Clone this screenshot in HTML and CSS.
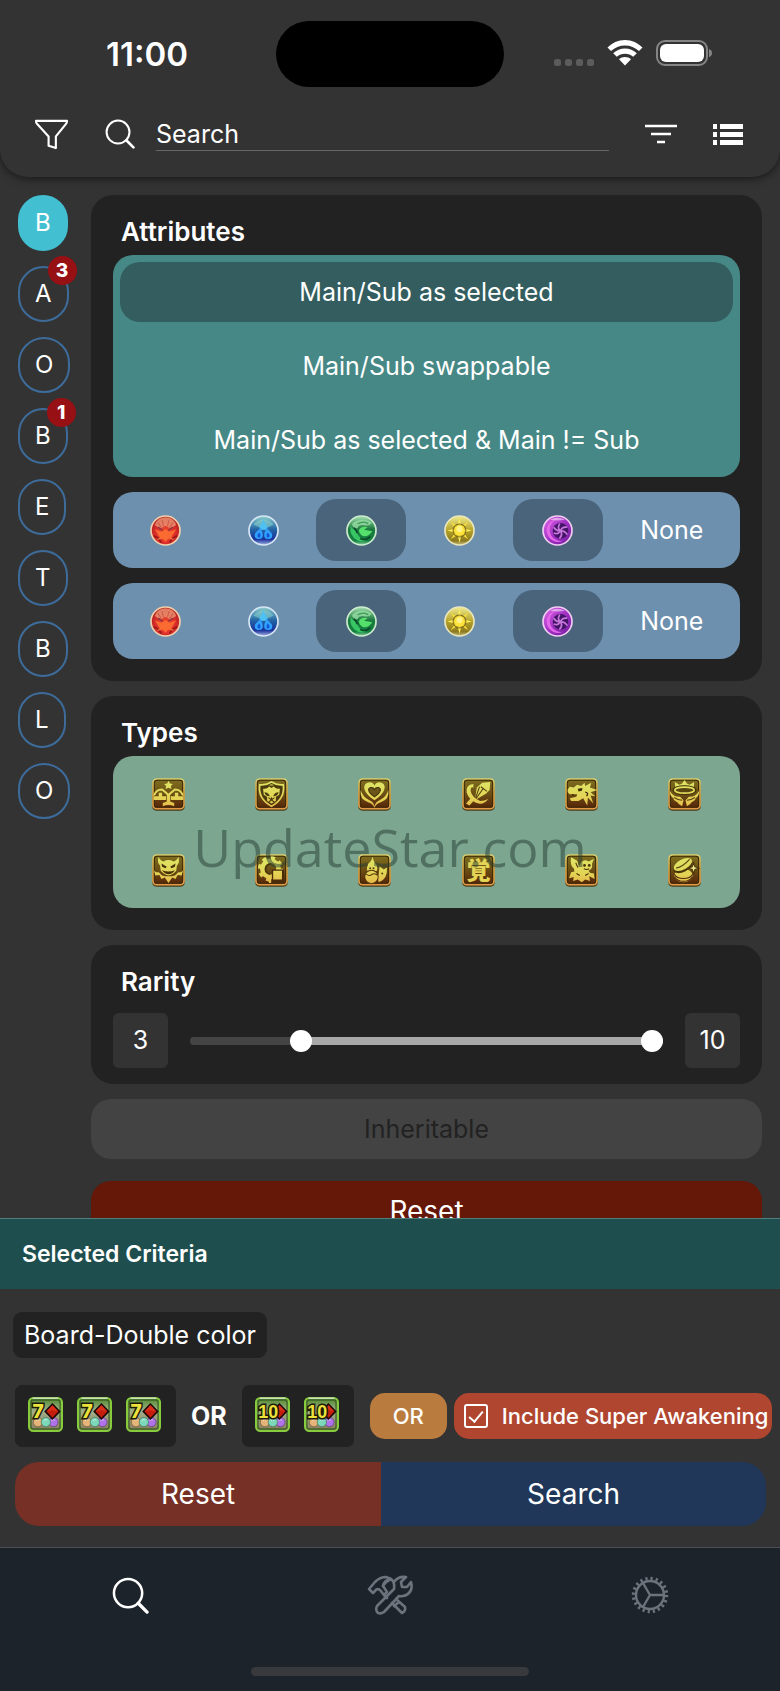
FILE: index.html
```html
<!DOCTYPE html>
<html lang="en">
<head>
    <meta charset="UTF-8">
    <meta name="viewport" content="width=device-width, initial-scale=1.0">
    <title>Search</title>
    <link rel="stylesheet" href="styles.css">
</head>
<body>
    <!-- Shared icons -->
    <svg class="sprite" width="0" height="0" aria-hidden="true">
        <defs>
            <linearGradient id="tile-bg" x1="0" y1="0" x2="0" y2="1">
                <stop offset="0" stop-color="#80701f"/>
                <stop offset="0.5" stop-color="#6b4f14"/>
                <stop offset="1" stop-color="#562308"/>
            </linearGradient>
            <linearGradient id="tile-edge" x1="0" y1="0" x2="0" y2="1">
                <stop offset="0" stop-color="#d9cf6c"/>
                <stop offset="0.5" stop-color="#dba747"/>
                <stop offset="1" stop-color="#e09a45"/>
            </linearGradient>
            <linearGradient id="gold" gradientUnits="userSpaceOnUse" x1="0" y1="10" x2="0" y2="90">
                <stop offset="0" stop-color="#dde566"/>
                <stop offset="0.6" stop-color="#e3d455"/>
                <stop offset="1" stop-color="#e6b548"/>
            </linearGradient>
            <radialGradient id="orb-red" cx="0.5" cy="0.6" r="0.55">
                <stop offset="0" stop-color="#f4532c"/>
                <stop offset="0.6" stop-color="#dd2f2b"/>
                <stop offset="1" stop-color="#b3201f"/>
            </radialGradient>
            <linearGradient id="orb-blue" x1="0" y1="0" x2="0" y2="1">
                <stop offset="0" stop-color="#8fd0cc"/>
                <stop offset="0.45" stop-color="#2467a5"/>
                <stop offset="0.8" stop-color="#17309a"/>
                <stop offset="1" stop-color="#a5b4e4"/>
            </linearGradient>
            <linearGradient id="orb-green" x1="0" y1="0" x2="0" y2="1">
                <stop offset="0" stop-color="#a5e0b0"/>
                <stop offset="0.45" stop-color="#1c7a3e"/>
                <stop offset="0.85" stop-color="#128040"/>
                <stop offset="1" stop-color="#8fd0a0"/>
            </linearGradient>
            <linearGradient id="orb-yellow" x1="0" y1="0" x2="0" y2="1">
                <stop offset="0" stop-color="#efeb8c"/>
                <stop offset="0.5" stop-color="#b5a128"/>
                <stop offset="0.85" stop-color="#8d7a20"/>
                <stop offset="1" stop-color="#c9c080"/>
            </linearGradient>
            <linearGradient id="orb-purple" x1="0" y1="0" x2="1" y2="1">
                <stop offset="0" stop-color="#e06be8"/>
                <stop offset="0.5" stop-color="#a231c4"/>
                <stop offset="1" stop-color="#6d1a9a"/>
            </linearGradient>
            <linearGradient id="awk-bg" x1="0" y1="0" x2="0" y2="1">
                <stop offset="0" stop-color="#4f8a2e"/>
                <stop offset="0.4" stop-color="#a3b08a"/>
                <stop offset="1" stop-color="#8a7a5c"/>
            </linearGradient>
        </defs>

        <symbol id="fire" viewBox="0 0 92 92">
            <circle cx="46" cy="46" r="43" fill="url(#orb-red)" stroke="#f0d0ac" stroke-width="5"/>
            <path d="M14 30 Q22 8 46 7 Q70 8 78 30 Q70 36 60 40 L46 32 L32 40 Q20 36 14 30Z" fill="#ee9c77" opacity="0.75"/>
            <path d="M24 22 L34 38 M36 16 L40 34 M56 16 L52 34 M68 22 L58 38" stroke="#c85a4a" stroke-width="3"/>
            <path d="M14 42 L34 50 L46 42 L58 50 L78 42 L68 58 L62 68 L52 72 L46 80 L40 72 L30 68 L24 58Z" fill="#fb6a31"/>
            <path d="M24 36 L38 46 M68 36 L54 46" stroke="#8d3440" stroke-width="4"/>
            <path d="M12 62 Q24 66 34 82 M80 62 Q68 66 58 82" fill="none" stroke="#9e1717" stroke-width="5"/>
            <path d="M22 72 L32 70 M70 72 L60 70" stroke="#fb8a51" stroke-width="3"/>
        </symbol>
        <symbol id="water" viewBox="0 0 92 92">
            <circle cx="46" cy="46" r="43" fill="url(#orb-blue)" stroke="#d6e6f4" stroke-width="5"/>
            <path d="M16 28 Q46 -2 76 28 Q62 38 46 38 Q30 38 16 28Z" fill="#8ad6d0" opacity="0.55"/>
            <path d="M46 12 C49 24 58 32 58 38 Q54 46 46 44 Q38 46 34 38 C34 32 43 24 46 12Z" fill="#4fc0f2"/>
            <path d="M36 38 C42 48 44 54 44 61 A12 11 0 0 1 20 60 C20 52 30 48 36 38Z" fill="#2fa0fb"/>
            <path d="M56 38 C50 48 48 54 48 61 A12 11 0 0 0 72 60 C72 52 62 48 56 38Z" fill="#2fa0fb"/>
            <path d="M34 52 Q38 58 36 66 Q30 68 28 62 Q28 56 34 52Z M58 52 Q54 58 56 66 Q62 68 64 62 Q64 56 58 52Z" fill="#1453d6"/>
        </symbol>
        <symbol id="wood" viewBox="0 0 92 92">
            <circle cx="46" cy="46" r="43" fill="url(#orb-green)" stroke="#cdeccf" stroke-width="5"/>
            <path d="M18 26 Q46 4 76 22 Q72 34 50 30 Q36 30 34 40 Q18 38 18 26Z" fill="#93d9a0" opacity="0.85"/>
            <path d="M34 26 Q54 16 66 26" fill="none" stroke="#3f9a58" stroke-width="4"/>
            <path d="M14 34 Q8 60 34 76 Q50 82 60 74 Q40 72 34 56 Q30 44 22 42Z" fill="#38c564"/>
            <path d="M38 46 Q44 32 64 36 L54 44 L78 48 Q66 66 50 62 Q40 58 38 46Z" fill="#55e06c"/>
            <path d="M24 38 Q30 44 34 54 M42 70 Q58 78 72 64" fill="none" stroke="#0a4a28" stroke-width="5"/>
        </symbol>
        <symbol id="light" viewBox="0 0 92 92">
            <circle cx="46" cy="46" r="43" fill="url(#orb-yellow)" stroke="#eae6bc" stroke-width="5"/>
            <path d="M46 10 L51 30 L41 30Z M46 82 L51 62 L41 62Z M10 46 L30 41 L30 51Z M82 46 L62 41 L62 51Z" fill="#ffef5a"/>
            <path d="M20 20 L38 32 L32 38Z M72 20 L54 32 L60 38Z M20 72 L38 60 L32 54Z M72 72 L54 60 L60 54Z" fill="#fbe13c"/>
            <circle cx="46" cy="46" r="19" fill="none" stroke="#7d6a18" stroke-width="3"/>
            <circle cx="46" cy="46" r="16" fill="#ffe338"/>
            <circle cx="46" cy="42" r="9" fill="#fff28a"/>
        </symbol>
        <symbol id="dark" viewBox="0 0 92 92">
            <circle cx="46" cy="46" r="43" fill="url(#orb-purple)" stroke="#f0ccf2" stroke-width="5"/>
            <path d="M48 12 A34 34 0 1 0 64 76 A32 32 0 0 1 48 12Z" fill="#e467ea"/>
            <circle cx="55" cy="47" r="23" fill="#431468"/>
            <path d="M55 47 Q44 40 52 27 M55 47 Q60 34 73 36 M55 47 Q68 46 74 57 M55 47 Q62 58 53 68 M55 47 Q48 58 37 54 M55 47 Q42 48 36 38" fill="none" stroke="#c878da" stroke-width="5" stroke-linecap="round"/>
            <path d="M24 14 Q46 2 68 14 Q46 18 24 14Z" fill="#fff" opacity="0.5"/>
        </symbol>

        <symbol id="tile" viewBox="0 0 98 98">
            <rect x="1" y="5" width="96" height="92" rx="12" fill="#4a3a18"/>
            <rect x="3" y="3" width="92" height="88" rx="11" fill="url(#tile-bg)" stroke="url(#tile-edge)" stroke-width="5"/>
            <rect x="7" y="7" width="84" height="80" rx="8" fill="none" stroke="#3d2a08" stroke-width="3"/>
        </symbol>
        <symbol id="balanced" viewBox="0 0 98 98">
            <use href="#tile"/>
            <path d="M49 8 L53 16 L62 18 L56 24 L58 33 L49 29 L40 33 L42 24 L36 18 L45 16Z" fill="url(#gold)"/>
            <path d="M6 52 Q12 34 30 34 L44 46 Q49 52 54 46 L68 34 Q86 34 92 52" fill="none" stroke="url(#gold)" stroke-width="6"/>
            <path d="M5 54 H42 V65 H5Z M56 54 H93 V65 H56Z M20 44 H30 V54 H20Z M68 44 H78 V54 H68Z" fill="url(#gold)"/>
            <path d="M44 48 H54 V70 L66 74 V84 Q49 76 32 84 V74 L44 70Z" fill="url(#gold)"/>
        </symbol>
        <symbol id="physical" viewBox="0 0 98 98">
            <use href="#tile"/>
            <path d="M14 20 Q34 22 49 12 Q64 22 84 20 Q90 62 49 84 Q8 62 14 20Z" fill="#4b3a0c" stroke="url(#gold)" stroke-width="5"/>
            <path d="M24 32 Q40 34 44 20 Q49 17 54 20 Q58 34 74 32 L72 50 L62 56 L62 68 L49 76 L36 68 L36 56 L26 50Z" fill="url(#gold)"/>
            <path d="M28 42 Q40 42 44 54 Q30 54 28 42Z M70 42 Q58 42 54 54 Q68 54 70 42Z M49 56 L53 64 H45Z M38 22 L49 30 L60 22" fill="#4b3a0c"/>
            <path d="M40 72 L58 58 M58 72 L40 58" stroke="#4b3a0c" stroke-width="3"/>
        </symbol>
        <symbol id="healer" viewBox="0 0 98 98">
            <use href="#tile"/>
            <path d="M49 66 C12 42 12 16 32 13 Q44 12 49 22 Q54 12 66 13 C86 16 86 42 49 66Z" fill="url(#gold)"/>
            <path d="M49 56 C28 42 28 30 38 28 Q46 27 49 34 Q52 27 60 28 C70 30 70 42 49 56Z" fill="#6b551a" stroke="#40300a" stroke-width="3"/>
            <path d="M8 36 Q14 58 34 66 Q46 70 49 84 Q52 70 64 66 Q84 58 90 36 Q94 64 68 72 Q54 76 49 88 Q44 76 30 72 Q4 64 8 36Z" fill="url(#gold)"/>
        </symbol>
        <symbol id="attacker" viewBox="0 0 98 98">
            <use href="#tile"/>
            <path d="M44 28 L60 14 L84 12 L82 36 L72 46 L38 66Z" fill="url(#gold)"/>
            <path d="M38 66 L64 30 M56 26 L74 40 M38 66 L52 26" fill="none" stroke="#54400f" stroke-width="3"/>
            <path d="M34 18 Q10 20 14 44 Q20 62 38 72 Q62 84 78 62 Q66 68 54 68 Q30 58 26 40 Q24 26 34 28Z" fill="url(#gold)"/>
            <path d="M40 62 L22 82 L12 76 L30 56Z" fill="url(#gold)"/>
        </symbol>
        <symbol id="dragon" viewBox="0 0 98 98">
            <use href="#tile"/>
            <path d="M8 34 L14 26 L26 28 L36 20 L48 24 L58 14 L60 24 L78 14 L74 28 L96 36 L76 42 L90 54 L76 52 L84 76 L68 58 L66 82 L54 60 L40 68 L18 68 L14 60 L34 56 L36 48 L14 48 L8 42Z" fill="url(#gold)"/>
            <path d="M38 32 L52 30 L50 38 L40 40Z M20 48 L24 54 L28 48Z" fill="#3e2a08"/>
            <path d="M60 42 Q72 44 64 54" fill="none" stroke="#3e2a08" stroke-width="4"/>
        </symbol>
        <symbol id="god" viewBox="0 0 98 98">
            <use href="#tile"/>
            <path d="M20 12 L34 20 L42 16 L49 6 L56 16 L64 20 L78 12 L76 30 H22Z" fill="url(#gold)"/>
            <ellipse cx="49" cy="36" rx="34" ry="13" fill="#57440f" stroke="#40300a" stroke-width="3"/>
            <ellipse cx="49" cy="36" rx="29" ry="9" fill="none" stroke="url(#gold)" stroke-width="5"/>
            <path d="M6 38 Q12 56 36 56 L46 66 L42 84 Q30 78 28 72 Q16 66 16 60 Q4 52 6 38Z M92 38 Q86 56 62 56 L52 66 L56 84 Q68 78 70 72 Q82 66 82 60 Q94 52 92 38Z" fill="url(#gold)"/>
            <path d="M18 58 Q30 66 42 66 M80 58 Q68 66 56 66" fill="none" stroke="#5a3d0e" stroke-width="3"/>
        </symbol>
        <symbol id="devil" viewBox="0 0 98 98">
            <use href="#tile"/>
            <path d="M20 8 Q22 18 34 22 Q49 14 64 22 Q76 18 78 8 Q84 24 74 34 L72 50 Q62 62 49 64 Q36 62 26 50 L24 34 Q14 24 20 8Z" fill="url(#gold)"/>
            <path d="M28 28 L44 38 L40 42 L30 38Z M70 28 L54 38 L58 42 L68 38Z M30 48 Q49 56 68 48 Q60 60 49 60 Q38 60 30 48Z" fill="#45300a"/>
            <path d="M5 46 Q8 56 20 54 L30 64 L40 66 H58 L68 64 L78 54 Q90 56 93 46 L88 64 L76 62 L70 74 L60 70 L49 86 L38 70 L28 74 L22 62 L10 64Z" fill="url(#gold)"/>
        </symbol>
        <symbol id="machine" viewBox="0 0 98 98">
            <use href="#tile"/>
            <circle cx="46" cy="44" r="24" fill="none" stroke="url(#gold)" stroke-width="14"/>
            <circle cx="46" cy="44" r="33" fill="none" stroke="url(#gold)" stroke-width="9" stroke-dasharray="13 12.9"/>
            <path d="M46 30 A15 15 0 1 0 46 60" fill="none" stroke="#4a340b" stroke-width="5"/>
            <path d="M50 46 H86 V86 H50Z" fill="#4a2a08"/>
            <path d="M54 50 H80 V76 H54Z M36 72 H48 V86 H42Z" fill="url(#gold)"/>
        </symbol>
        <symbol id="evo" viewBox="0 0 98 98">
            <use href="#tile"/>
            <path d="M44 8 Q40 22 30 30 Q24 42 28 54 Q42 60 56 50 Q60 36 52 28 Q44 20 44 8Z" fill="url(#gold)"/>
            <path d="M64 36 L76 46 L86 40 Q88 76 62 84 Q56 70 62 58Z" fill="url(#gold)"/>
            <circle cx="40" cy="68" r="20" fill="url(#gold)" stroke="#54300a" stroke-width="3"/>
            <path d="M24 60 Q34 68 42 60 Q52 56 58 64" fill="none" stroke="#54300a" stroke-width="3"/>
            <circle cx="36" cy="42" r="3" fill="#54400f"/>
            <circle cx="46" cy="42" r="3" fill="#54400f"/>
            <circle cx="72" cy="58" r="3" fill="#54400f"/>
        </symbol>
        <symbol id="enhance" viewBox="0 0 98 98">
            <use href="#tile"/>
            <path d="M18 10 L36 20 L42 36 L48 24 Q58 14 70 22 L86 14 L80 30 Q84 44 70 50 L74 56 L86 58 L88 74 L72 66 L74 80 L60 76 L50 84 L38 76 L24 80 L26 68 L12 72 L18 54 L28 52 L26 42 Q14 36 18 10Z" fill="url(#gold)"/>
            <circle cx="58" cy="34" r="4" fill="#45300a"/>
            <circle cx="72" cy="34" r="4" fill="#45300a"/>
            <path d="M56 44 Q64 48 72 44 M34 58 L44 64 M60 64 L70 58 M32 26 L38 40" fill="none" stroke="#45300a" stroke-width="3"/>
        </symbol>
        <symbol id="redeem" viewBox="0 0 98 98">
            <use href="#tile"/>
            <ellipse cx="46" cy="64" rx="27" ry="20" fill="url(#gold)"/>
            <path d="M19 60 Q26 73 46 73 Q66 73 73 60 M20 68 Q28 81 46 81 Q64 81 72 68" fill="none" stroke="#4a2a08" stroke-width="3"/>
            <ellipse cx="44" cy="36" rx="31" ry="17" transform="rotate(-28 44 36)" fill="#4a340b"/>
            <ellipse cx="44" cy="31" rx="30" ry="15" transform="rotate(-28 44 31)" fill="url(#gold)"/>
            <path d="M24 42 Q44 38 64 16" fill="none" stroke="#5e4c14" stroke-width="4"/>
            <path d="M76 26 L80 38 L92 42 L80 46 L76 58 L72 46 L60 42 L72 38Z" fill="#f0ea8a" stroke="#4a340b" stroke-width="3"/>
        </symbol>

        <symbol id="awakening" viewBox="0 0 106 106">
            <rect x="3" y="3" width="100" height="100" rx="13" fill="url(#awk-bg)" stroke="#86cc3c" stroke-width="6"/>
            <path d="M14 4 H92" stroke="#c8dfb8" stroke-width="5"/>
            <rect x="9" y="9" width="88" height="88" rx="8" fill="none" stroke="#3f6424" stroke-width="4"/>
            <circle cx="30" cy="76" r="14" fill="#e5b478" stroke="#6e5638" stroke-width="2"/>
            <circle cx="77" cy="76" r="14" fill="#b072e8" stroke="#523a78" stroke-width="2"/>
            <circle cx="54" cy="76" r="14" fill="#7cd8b8" stroke="#38705c" stroke-width="2"/>
            <path d="M24 72 Q28 66 34 70 M48 72 Q52 66 58 70 M71 72 Q75 66 81 70" fill="none" stroke="#fff" stroke-width="3" opacity="0.6"/>
            <path d="M74 18 L99 44 L74 70 L49 44Z" fill="#1e0806"/>
            <path d="M74 25 L92 44 L74 63 L56 44Z" fill="#c41c0d"/>
            <path d="M74 25 L92 44 L74 40 L56 44Z" fill="#dc3018"/>
        </symbol>

        <symbol id="magnifier" viewBox="0 0 38 38">
            <circle cx="16.5" cy="16.5" r="14.5" fill="none" stroke="currentColor" stroke-width="2.6"/>
            <path d="M27 27 L36 36" stroke="currentColor" stroke-width="3.4" stroke-linecap="round"/>
        </symbol>
    </svg>

    <header class="top">
        <div class="status">
            <time class="clock">11:00</time>
            <div class="island"></div>
            <div class="signals">
                <svg width="40" height="28" viewBox="0 0 40 28" aria-hidden="true">
                    <g fill="#5c5c5c">
                        <rect x="0" y="19" width="7" height="7" rx="2.5"/>
                        <rect x="11" y="19" width="7" height="7" rx="2.5"/>
                        <rect x="22" y="19" width="7" height="7" rx="2.5"/>
                        <rect x="33" y="19" width="7" height="7" rx="2.5"/>
                    </g>
                </svg>
                <svg width="36" height="28" viewBox="0 0 36 28" aria-hidden="true">
                    <path d="M18 0 C25 0 31 3 35.5 7.500 L32 11 C28 7.500 23.500 5.500 18 5.500 C12.500 5.500 8 7.500 4 11 L0.500 7.500 C5 3 11 0 18 0Z" fill="#fff"/>
                    <path d="M18 8.500 C22.500 8.500 26.500 10 29.800 13.300 L26.200 16.800 C24 14.800 21.200 13.700 18 13.700 C14.800 13.700 12 14.800 9.800 16.800 L6.200 13.300 C9.500 10 13.500 8.500 18 8.500Z" fill="#fff"/>
                    <path d="M18 17 C20.300 17 22.300 17.800 24 19.200 L18 25.500 L12 19.200 C13.700 17.800 15.700 17 18 17Z" fill="#fff"/>
                </svg>
                <svg width="56" height="28" viewBox="0 0 56 28" aria-hidden="true">
                    <rect x="1" y="1" width="50" height="24" rx="8" fill="none" stroke="#858585" stroke-width="2"/>
                    <rect x="4" y="4" width="44" height="18" rx="6" fill="#fff"/>
                    <path d="M53 9 Q56 10 56 13 Q56 16 53 17Z" fill="#858585"/>
                </svg>
            </div>
        </div>
        <div class="toolbar">
            <button class="icon-btn" aria-label="Filter">
                <svg width="35" height="31" viewBox="0 0 36 32" fill="none" stroke="#fff" stroke-width="2.2" stroke-linejoin="round">
                    <path d="M2 2 H34 Q34 4 33 5 L22.5 18 V30 L15 27.5 V18 L3 5 Q2 4 2 2Z"/>
                </svg>
            </button>
            <div class="search-box">
                <svg class="search-icon" width="30" height="30"><use href="#magnifier"/></svg>
                <input type="search" placeholder="Search" aria-label="Search">
            </div>
            <button class="icon-btn" aria-label="Sort">
                <svg width="32" height="22" viewBox="0 0 32 22" fill="none" stroke="#fff" stroke-width="2.5">
                    <path d="M0 3 H32 M6 11 H26 M12 19 H20"/>
                </svg>
            </button>
            <button class="icon-btn" aria-label="List view">
                <svg width="30" height="22" viewBox="0 0 30 22" fill="#fff">
                    <path d="M0 1 H4 V6 H0Z M7 1 H30 V6 H7Z M0 9 H4 V14 H0Z M7 9 H30 V14 H7Z M0 17 H4 V22 H0Z M7 17 H30 V22 H7Z"/>
                </svg>
            </button>
        </div>
    </header>

    <main class="content">
        <nav class="sections" aria-label="Sections">
            <button class="section-btn active">B</button>
            <button class="section-btn">A<span class="badge">3</span></button>
            <button class="section-btn">O</button>
            <button class="section-btn">B<span class="badge">1</span></button>
            <button class="section-btn">E</button>
            <button class="section-btn">T</button>
            <button class="section-btn">B</button>
            <button class="section-btn">L</button>
            <button class="section-btn">O</button>
        </nav>

        <div class="panels">
            <section class="panel">
                <h2>Attributes</h2>
                <div class="modes">
                    <button class="option selected" aria-pressed="true">Main/Sub as selected</button>
                    <button class="option" aria-pressed="false">Main/Sub swappable</button>
                    <button class="option" aria-pressed="false">Main/Sub as selected &amp; Main != Sub</button>
                </div>
                <div class="orbs">
                    <button class="option" aria-label="Fire"><svg class="orb"><use href="#fire"/></svg></button>
                    <button class="option" aria-label="Water"><svg class="orb"><use href="#water"/></svg></button>
                    <button class="option selected" aria-label="Wood"><svg class="orb"><use href="#wood"/></svg></button>
                    <button class="option" aria-label="Light"><svg class="orb"><use href="#light"/></svg></button>
                    <button class="option selected" aria-label="Dark"><svg class="orb"><use href="#dark"/></svg></button>
                    <button class="option">None</button>
                </div>
                <div class="orbs">
                    <button class="option" aria-label="Fire"><svg class="orb"><use href="#fire"/></svg></button>
                    <button class="option" aria-label="Water"><svg class="orb"><use href="#water"/></svg></button>
                    <button class="option selected" aria-label="Wood"><svg class="orb"><use href="#wood"/></svg></button>
                    <button class="option" aria-label="Light"><svg class="orb"><use href="#light"/></svg></button>
                    <button class="option selected" aria-label="Dark"><svg class="orb"><use href="#dark"/></svg></button>
                    <button class="option">None</button>
                </div>
            </section>

            <section class="panel">
                <h2>Types</h2>
                <div class="types">
                    <button class="option" aria-label="Balanced"><svg class="type"><use href="#balanced"/></svg></button>
                    <button class="option" aria-label="Physical"><svg class="type"><use href="#physical"/></svg></button>
                    <button class="option" aria-label="Healer"><svg class="type"><use href="#healer"/></svg></button>
                    <button class="option" aria-label="Attacker"><svg class="type"><use href="#attacker"/></svg></button>
                    <button class="option" aria-label="Dragon"><svg class="type"><use href="#dragon"/></svg></button>
                    <button class="option" aria-label="God"><svg class="type"><use href="#god"/></svg></button>
                    <button class="option" aria-label="Devil"><svg class="type"><use href="#devil"/></svg></button>
                    <button class="option" aria-label="Machine"><svg class="type"><use href="#machine"/></svg></button>
                    <button class="option" aria-label="Evo Material"><svg class="type"><use href="#evo"/></svg></button>
                    <button class="option" aria-label="Awoken Material"><svg class="type" viewBox="0 0 98 98"><use href="#tile"/><text x="49" y="75" class="tile-text">覚</text></svg></button>
                    <button class="option" aria-label="Enhance Material"><svg class="type"><use href="#enhance"/></svg></button>
                    <button class="option" aria-label="Redeemable Material"><svg class="type"><use href="#redeem"/></svg></button>
                </div>
            </section>

            <section class="panel rarity">
                <h2>Rarity</h2>
                <div class="range-row">
                    <output class="range-value">3</output>
                    <div class="range">
                        <div class="track"></div>
                        <input type="range" min="1" max="10" value="3" aria-label="Minimum rarity">
                        <input type="range" min="1" max="10" value="10" aria-label="Maximum rarity">
                    </div>
                    <output class="range-value">10</output>
                </div>
            </section>

            <button class="wide-btn">Inheritable</button>
            <button class="wide-btn danger">Reset</button>
        </div>
        <div class="watermark">UpdateStar.com</div>
    </main>

    <section class="criteria">
        <h2 class="criteria-title">Selected Criteria</h2>
        <div class="criteria-body">
            <span class="chip">Board-Double color</span>
            <div class="awakenings">
                <div class="awk-group">
                    <svg class="awk" viewBox="0 0 106 106"><use href="#awakening"/><text x="14" y="64" class="awk-text">7</text></svg>
                    <svg class="awk" viewBox="0 0 106 106"><use href="#awakening"/><text x="14" y="64" class="awk-text">7</text></svg>
                    <svg class="awk" viewBox="0 0 106 106"><use href="#awakening"/><text x="14" y="64" class="awk-text">7</text></svg>
                </div>
                <strong class="or">OR</strong>
                <div class="awk-group">
                    <svg class="awk" viewBox="0 0 106 106"><use href="#awakening"/><text x="10" y="64" class="awk-text ten">10</text></svg>
                    <svg class="awk" viewBox="0 0 106 106"><use href="#awakening"/><text x="10" y="64" class="awk-text ten">10</text></svg>
                </div>
                <button class="or-btn">OR</button>
                <label class="super">
                    <input type="checkbox" checked>
                    Include Super Awakening
                </label>
            </div>
            <div class="actions">
                <button class="reset">Reset</button>
                <button class="search">Search</button>
            </div>
        </div>
    </section>

    <footer class="tabs">
        <nav class="tab-row">
            <a href="#search" class="tab current" aria-label="Search">
                <svg width="37" height="37"><use href="#magnifier"/></svg>
            </a>
            <a href="#tools" class="tab" aria-label="Tools">
                <svg width="46" height="40" viewBox="0 0 46 40" fill="none" stroke="currentColor" stroke-width="2.6" stroke-linejoin="round" stroke-linecap="round">
                    <path d="M2 14 L8 7 Q13 2 19 2 L24 4 Q17 5 16 11 L20 17 L17 20 L13 15 Q10 13 8 16 L6 18Z"/>
                    <path d="M16 11 Q18 7 24 4 Q28 7 27 14 L10 31 Q8 35 11 38 Q14 39 17 37 L32 21 Q38 22 42 18 Q46 14 44 7 L40 12 L35 12 L34 7 L39 2 Q31 1 27 7"/>
                    <path d="M17 20 L20 23 M29 24 L38 32 Q39 36 35 38 L25 28 M32 27 L27 31"/>
                </svg>
            </a>
            <a href="#settings" class="tab" aria-label="Settings">
                <svg width="38" height="38" viewBox="0 0 38 38" fill="none" stroke="currentColor">
                    <circle cx="19" cy="19" r="14" stroke-width="2.4"/>
                    <circle cx="19" cy="19" r="16.5" stroke-width="3.5" stroke-dasharray="2.2 2.984"/>
                    <path d="M19 19 H33 M19 19 L12 7 M19 19 L12 31" stroke-width="2.4"/>
                </svg>
            </a>
        </nav>
        <div class="home-bar"></div>
    </footer>
</body>
</html>
```

FILE: styles.css
```css
* {
    box-sizing: border-box;
}

body {
    margin: 0;
    height: 100vh;
    display: flex;
    flex-direction: column;
    background-color: #333;
    color: white;
    font-family: Inter, "Liberation Sans", sans-serif;
    font-size: 25px;
    line-height: 30px;
}

button,
input {
    font: inherit;
    color: inherit;
    background: none;
    border: none;
    margin: 0;
    padding: 0;
}

button {
    cursor: pointer;
}

svg {
    display: block;
    flex: none;
}

h2 {
    margin: 0;
    font-size: 26px;
    font-weight: 600;
}

.sprite {
    height: 0;
}

/* Header */
.top {
    flex: none;
    padding: 21px 0 26px;
    border-radius: 0 0 28px 28px;
    background-color: #333;
    box-shadow: 0 2px 8px rgba(0, 0, 0, 0.5);
    z-index: 1;
}

.status {
    display: grid;
    grid-template-columns: 1fr 228px 1fr;
    align-items: center;
}

.clock {
    padding-left: 18px;
    font-size: 33px;
    font-weight: 600;
    text-align: center;
}

.island {
    height: 66px;
    border-radius: 33px;
    background-color: black;
}

.signals {
    display: flex;
    justify-content: flex-end;
    gap: 13px;
    padding-right: 68px;
}

.toolbar {
    display: flex;
    align-items: center;
    gap: 36px;
    margin-top: 30px;
    padding: 0 37px 0 34px;
}

.search-box {
    flex: 1;
    display: flex;
    align-items: center;
    gap: 21px;
}

.search-box input {
    flex: 1;
    min-width: 0;
    height: 34px;
    border-bottom: 1px solid #666;
    border-radius: 0;
    outline: none;
    appearance: none;
}

.search-box input::placeholder {
    color: white;
    opacity: 1;
}

/* Side buttons and panels */
.content {
    flex: 1;
    min-height: 0;
    position: relative;
    display: flex;
    align-items: flex-start;
    gap: 21px;
    padding: 18px 18px 0 18px;
    overflow: hidden;
}

.sections {
    width: 52px;
    display: flex;
    flex-direction: column;
    align-items: flex-start;
    gap: 15px;
    font-size: 24px;
}

.section-btn {
    position: relative;
    height: 56px;
    padding: 0 15px;
    border: 2px solid #3d6c9b;
    border-radius: 26px;
}

.section-btn.active {
    background-color: #42c0d2;
    border-color: #42c0d2;
}

.badge {
    position: absolute;
    top: -12px;
    right: -10px;
    width: 29px;
    height: 29px;
    border-radius: 50%;
    background-color: #961014;
    font-size: 19px;
    font-weight: 800;
    line-height: 29px;
}

.panels {
    flex: 1;
    min-width: 0;
    display: flex;
    flex-direction: column;
    gap: 15px;
}

.panel {
    display: flex;
    flex-direction: column;
    gap: 15px;
    padding: 22px;
    border-radius: 22px;
    background-color: #222;
}

.panel h2 {
    margin-bottom: -7px;
    padding-left: 8px;
}

.option {
    display: flex;
    align-items: center;
    justify-content: center;
    height: 62px;
    border-radius: 20px;
}

.modes {
    display: flex;
    flex-direction: column;
    gap: 14px;
    padding: 7px;
    border-radius: 20px;
    background-color: #468886;
}

.modes .option {
    height: 60px;
}

.modes .selected {
    background-color: #335d5e;
}

.orbs {
    display: flex;
    gap: 8px;
    padding: 7px;
    border-radius: 20px;
    background-color: #6d90ae;
}

.orbs .option {
    flex: 1 1 auto;
}

.orbs .selected {
    background-color: #4a647b;
}

.orb {
    width: 31px;
    height: 31px;
}

.types {
    display: grid;
    grid-template-columns: repeat(6, 1fr);
    gap: 14px 6px;
    padding: 7px;
    border-radius: 20px;
    background-color: #7da690;
}

.type {
    width: 33px;
    height: 33px;
}

.tile-text {
    fill: #e3d455;
    font-family: "Noto Sans CJK JP", sans-serif;
    font-size: 72px;
    font-weight: 900;
    text-anchor: middle;
}

.watermark {
    position: absolute;
    top: 630px;
    left: 0;
    right: 0;
    color: rgba(35, 60, 50, 0.5);
    font-family: "Open Sans", "Noto Sans", sans-serif;
    font-size: 52px;
    line-height: 80px;
    text-align: center;
    pointer-events: none;
}

/* Rarity slider */
.rarity {
    padding-bottom: 16px;
}

.range-row {
    display: flex;
    align-items: center;
    gap: 22px;
    margin-top: 8px;
}

.range-value {
    width: 55px;
    height: 55px;
    border-radius: 6px;
    background-color: #333;
    line-height: 55px;
    text-align: center;
}

.range {
    flex: 1;
    display: grid;
    align-items: center;
}

.range > * {
    grid-area: 1 / 1;
}

.track {
    height: 8px;
    border-radius: 4px;
    background: linear-gradient(to right, #444 24%, #a8a8a8 24%);
}

.range input {
    width: 100%;
    height: 22px;
    appearance: none;
    pointer-events: none;
}

.range input::-webkit-slider-thumb {
    appearance: none;
    width: 22px;
    height: 22px;
    border-radius: 50%;
    background-color: white;
    pointer-events: auto;
}

.wide-btn {
    height: 60px;
    border-radius: 20px;
    background-color: #434343;
    color: #222;
}

.wide-btn.danger {
    margin-top: 7px;
    background-color: #651708;
    color: white;
    font-size: 28px;
}

/* Selected criteria */
.criteria {
    flex: none;
    background-color: #333;
}

.criteria-title {
    padding: 20px 22px;
    border-top: 1px solid #4f807d;
    background-color: #1e4f4e;
    font-size: 23px;
}

.criteria-body {
    padding: 23px 8px 21px 13px;
}

.chip {
    display: inline-block;
    padding: 8px 11px;
    border-radius: 9px;
    background-color: #222;
}

.awakenings {
    display: flex;
    align-items: center;
    margin-top: 27px;
    padding-left: 2px;
}

.awk-group {
    display: flex;
    gap: 14px;
    padding: 12px 15px 15px 13px;
    border-radius: 7px;
    background-color: #222;
}

.awk {
    width: 35px;
    height: 35px;
}

.awk-text {
    fill: #ece03c;
    stroke: #1c1a06;
    stroke-width: 9px;
    paint-order: stroke;
    font-size: 58px;
    font-weight: 800;
}

.awk-text.ten {
    font-family: "Liberation Sans Narrow", "Liberation Sans", sans-serif;
    font-size: 54px;
}

.or {
    padding: 0 15px;
    font-weight: 700;
}

.or-btn {
    height: 46px;
    margin: 0 7px 0 16px;
    padding: 0 23px;
    border-radius: 15px;
    background-color: #b97c3e;
    font-size: 22px;
    font-weight: 500;
}

.super {
    flex: 1;
    display: flex;
    align-items: center;
    gap: 14px;
    height: 46px;
    padding-left: 10px;
    border-radius: 15px;
    background-color: #b04630;
    font-size: 22px;
    font-weight: 500;
    white-space: nowrap;
}

.super input {
    appearance: none;
    flex: none;
    display: grid;
    place-items: center;
    width: 24px;
    height: 24px;
    border: 2px solid white;
    border-radius: 3px;
}

.super input:checked::after {
    content: "";
    width: 6px;
    height: 12px;
    margin-bottom: 3px;
    border: solid white;
    border-width: 0 2px 2px 0;
    transform: rotate(40deg);
}

.actions {
    display: flex;
    margin: 15px 6px 0 2px;
    border-radius: 24px;
    overflow: hidden;
    font-size: 28px;
}

.actions button {
    flex: 1 1 auto;
    height: 64px;
}

.reset {
    background-color: #773025;
}

.search {
    background-color: #203759;
}

/* Tab bar */
.tabs {
    flex: none;
    padding: 27px 0 15px;
    border-top: 1px solid #4a4f53;
    background-color: #1d232b;
}

.tab-row {
    display: grid;
    grid-template-columns: repeat(3, 1fr);
    justify-items: center;
}

.tab {
    display: flex;
    align-items: center;
    height: 40px;
    color: #6b737d;
}

.tab.current {
    color: white;
}

.home-bar {
    width: 278px;
    height: 9px;
    margin: 52px auto 0;
    border-radius: 5px;
    background-color: #38393c;
}
```
